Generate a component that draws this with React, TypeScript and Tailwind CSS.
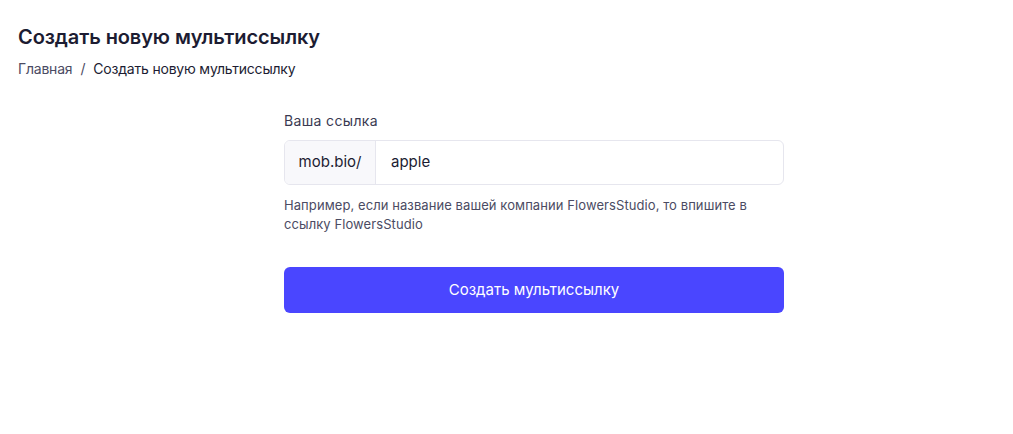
export default function App() {
  return (
    <div className="min-h-[434px] bg-white px-[18px] pt-[24px] text-[#1c1c32]" style={{ fontFamily: 'Inter, "Noto Sans", sans-serif' }}>
      {/* Header */}
      <h1 className="text-[20px] font-semibold leading-[26px] tracking-[-0.1px]">Создать новую мультиссылку</h1>
      <nav className="mt-[10px] flex items-center text-[14px] leading-[18px] tracking-[-0.2px]">
        <span className="text-[#4b4b63]">Главная</span>
        <span className="mx-[8px] text-[#4b4b63]">/</span>
        <span className="text-[#1c1c32]">Создать новую мультиссылку</span>
      </nav>

      {/* Form */}
      <div className="ml-[266px] mt-[33px] w-[500px]">
        <label className="block text-[14px] leading-[20px] tracking-[0.35px] text-[#3a3a52]">Ваша ссылка</label>
        <div className="mt-[9px] flex h-[45px] overflow-hidden rounded-[6px] border border-[#e6e6ee]">
          <div className="flex w-[91px] items-center justify-center border-r border-[#e6e6ee] bg-[#f8f8fb] text-[15px] text-[#1c1c32]">
            mob.bio/
          </div>
          <input
            defaultValue="apple"
            className="flex-1 px-[15px] text-[15px] text-[#1c1c32] outline-none"
          />
        </div>
        <p className="mt-[11px] text-[13px] leading-[19px] tracking-[0.08px] text-[#4b4b63]">
          Например, если название вашей компании FlowersStudio, то впишите в ссылку FlowersStudio
        </p>
        <button className="mt-[33px] h-[46px] w-full rounded-[6px] bg-[#4a46ff] text-[15px] text-white">
          Создать мультиссылку
        </button>
      </div>
    </div>
  );
}
